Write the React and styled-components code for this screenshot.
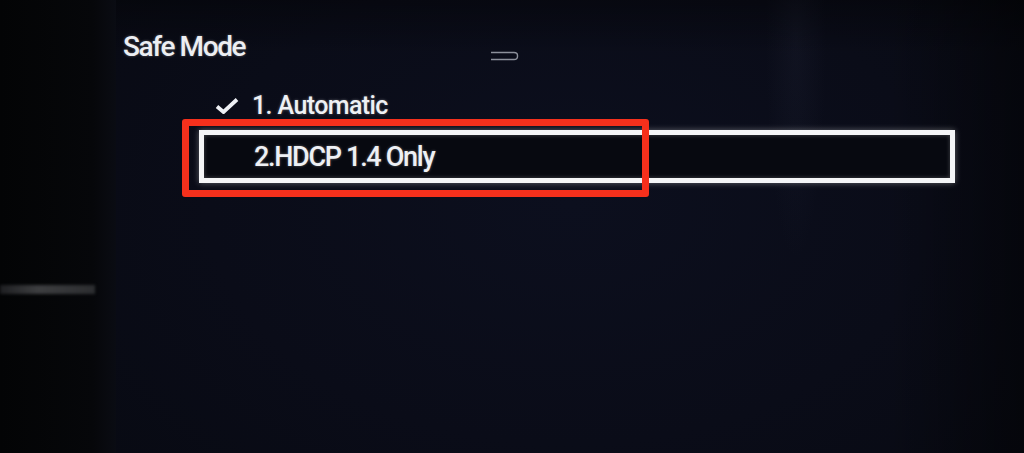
import React from "react";
import styled, { createGlobalStyle } from "styled-components";

const GlobalStyle = createGlobalStyle`
  html, body {
    margin: 0;
    padding: 0;
    background: #05060a;
  }
  body {
    font-family: Roboto, "Open Sans", "Liberation Sans", sans-serif;
  }
`;

const Screen = styled.div`
  width: 1024px;
  height: 453px;
  display: flex;
  overflow: hidden;
  background: #05060a;
`;

const Bezel = styled.div`
  width: 116px;
  flex-shrink: 0;
  display: flex;
  flex-direction: column;
  padding-top: 285px;
  box-sizing: border-box;
  background: linear-gradient(90deg, #030405 0%, #06070a 80%, #0a0c13 100%);
`;

const BezelLine = styled.div`
  width: 95px;
  height: 9px;
  background: linear-gradient(90deg, #1e1f22 0%, #3d3e40 40%, #2c2d30 100%);
  filter: blur(1.5px);
`;

const Panel = styled.div`
  flex: 1;
  position: relative;
  padding: 30px 0 0 7px;
  box-sizing: border-box;
  background:
    linear-gradient(90deg, rgba(0, 0, 0, 0) 85%, rgba(0, 0, 0, 0.45) 100%),
    linear-gradient(180deg, rgba(0, 0, 0, 0.35) 0%, rgba(0, 0, 0, 0) 12%),
    radial-gradient(ellipse 30px 220px at 680px 40px, rgba(60, 66, 90, 0.12), rgba(0, 0, 0, 0)),
    radial-gradient(ellipse 600px 400px at 50% 45%, #0c0f1e 0%, #0a0c18 60%, #080a13 100%);
`;

const Header = styled.div`
  display: flex;
  align-items: center;
`;

const Title = styled.h1`
  margin: 0;
  font-size: 28px;
  line-height: 34px;
  font-weight: 500;
  letter-spacing: -1.4px;
  color: #eceef2;
  text-shadow: 0 0 3px rgba(255, 255, 255, 0.35);
`;

const BackIcon = styled.svg`
  margin-left: 245px;
  margin-top: 18px;
  opacity: 0.75;
`;

const Options = styled.div`
  display: flex;
  flex-direction: column;
  margin-top: 27px;
  margin-left: 76px;
`;

const OptionRow = styled.div`
  display: flex;
  align-items: center;
  gap: 13px;
  padding-left: 16px;
  height: 30px;
  margin-bottom: 9px;
`;

const OptionText = styled.span`
  font-size: ${(p) => p.$size}px;
  line-height: 30px;
  font-weight: 500;
  letter-spacing: ${(p) => p.$track}px;
  color: #eef0f4;
  text-shadow: 0 0 3px rgba(255, 255, 255, 0.35);
`;

const Focused = styled.div`
  position: relative;
  width: 756px;
  height: 53px;
  box-sizing: border-box;
  border: 5px solid #f4f5f7;
  display: flex;
  align-items: center;
  padding-left: 50px;
  box-shadow: 0 0 6px rgba(255, 255, 255, 0.35), inset 0 0 4px rgba(255, 255, 255, 0.25);
  background: #070910;
`;

const Annotation = styled.div`
  position: absolute;
  left: -22px;
  top: -16px;
  width: 467px;
  height: 78px;
  box-sizing: border-box;
  border: 7px solid #f5301c;
  border-radius: 3px;
  pointer-events: none;
`;

const Check = () => (
  <svg width="24" height="16" viewBox="0 0 24 16">
    <path
      d="M2 8.5 L8.5 14 L22 1.5"
      fill="none"
      stroke="#eef0f4"
      strokeWidth="3.8"
      strokeLinejoin="miter"
    />
  </svg>
);

export default function App() {
  return (
    <>
      <GlobalStyle />
      <Screen>
        <Bezel>
          <BezelLine />
        </Bezel>
        <Panel>
          <Header>
            <Title>Safe Mode</Title>
            <BackIcon width="29" height="10" viewBox="0 0 29 10">
              <path
                d="M1 1.5 H24 Q27.5 1.5 27.5 4.5 V5.5 Q27.5 8.5 24 8.5 H1"
                fill="none"
                stroke="#b8bcc6"
                strokeWidth="1.4"
              />
            </BackIcon>
          </Header>
          <Options>
            <OptionRow>
              <Check />
              <OptionText $size={25} $track={-0.6}>1. Automatic</OptionText>
            </OptionRow>
            <Focused>
              <OptionText $size={27} $track={-1.3}>2.HDCP 1.4 Only</OptionText>
              <Annotation />
            </Focused>
          </Options>
        </Panel>
      </Screen>
    </>
  );
}
